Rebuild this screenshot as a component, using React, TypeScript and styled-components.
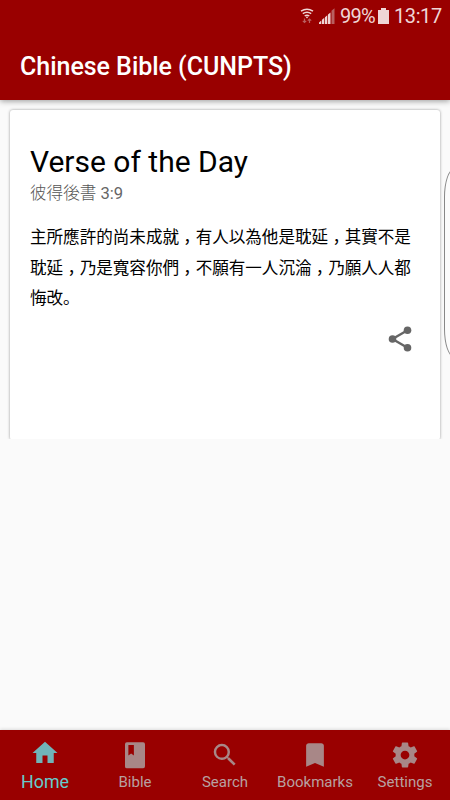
import React from "react";
import styled, { createGlobalStyle } from "styled-components";

const GlobalStyle = createGlobalStyle`
  * { box-sizing: border-box; }
  body { margin: 0; background: #fafafa; font-family: Roboto, "Noto Sans CJK JP", sans-serif; }
`;

const Screen = styled.div`
  position: relative;
  display: flex;
  flex-direction: column;
  width: 450px;
  height: 800px;
  overflow: hidden;
  background: #fafafa;
`;

const Header = styled.header`
  flex: none;
  height: 100px;
  background: #990000;
  box-shadow: 0 1px 6px rgba(0, 0, 0, 0.4);
  z-index: 1;
`;

const StatusBar = styled.div`
  display: flex;
  align-items: center;
  justify-content: flex-end;
  height: 32px;
  padding-right: 8px;
  color: #efd6d6;
  font-size: 20px;
  line-height: 32px;
  svg { flex: none; }
`;

const Percent = styled.span`
  width: 35px;
  margin: 0 3px 0 5px;
  letter-spacing: -0.8px;
  white-space: nowrap;
`;

const Clock = styled.span`
  width: 48px;
  margin-left: 5px;
  letter-spacing: -0.4px;
  white-space: nowrap;
`;

const Title = styled.h1`
  margin: 0;
  padding: 0 20px;
  color: #fff;
  font-size: 25px;
  font-weight: 500;
  line-height: 70px;
  letter-spacing: -0.03px;
  white-space: nowrap;
`;

const Content = styled.main`
  flex: 1;
  padding: 10px 10px 0;
`;

const CardClip = styled.div`
  height: 329px;
  margin: -4px -6px 0;
  padding: 4px 6px 0;
  box-sizing: content-box;
  overflow: hidden;
`;

const Card = styled.article`
  height: 330px;
  padding: 32px 20px 0;
  background: #fff;
  border-radius: 3px;
  box-shadow: 0 0 3px rgba(0, 0, 0, 0.4);
`;

const Heading = styled.h2`
  margin: 0;
  color: #000;
  font-size: 30px;
  font-weight: 400;
  line-height: 40px;
`;

const Reference = styled.p`
  margin: 1px 0 0;
  color: #666;
  font-family: Roboto, "Noto Sans CJK JP", sans-serif;
  font-size: 16.6px;
  font-weight: 400;
  line-height: 22px;
`;

const CjkLight = styled.span`
  color: #555;
  font-weight: 300;
`;

const Verse = styled.p`
  margin: 18px 0 0;
  color: #000;
  font-size: 16.57px;
  line-height: 30.5px;
  white-space: nowrap;
`;

const Line = styled.span`
  display: block;
`;

const Comma = styled.span`
  position: relative;
  top: 5px;
  font-family: "Noto Sans CJK TC", sans-serif;
  line-height: 1;
`;

const ShareButton = styled.button`
  display: block;
  margin: 9px 7px 0 auto;
  padding: 0;
  border: 0;
  background: none;
  svg { display: block; }
`;

const EdgeHandle = styled.div`
  position: absolute;
  top: 169px;
  left: 444px;
  width: 20px;
  height: 188px;
  border: 1px solid #888;
  border-radius: 10px / 28px;
  background: #fcfcfc;
`;

const TabBar = styled.nav`
  display: grid;
  grid-template-columns: repeat(5, 1fr);
  flex: none;
  height: 70px;
  background: #990000;
  box-shadow: 0 -1px 3px rgba(0, 0, 0, 0.12);
`;

const Tab = styled.a<{ $active?: boolean }>`
  display: flex;
  flex-direction: column;
  align-items: center;
  padding-top: ${(p) => (p.$active ? 8 : 10)}px;
  color: ${(p) => (p.$active ? "#66cccc" : "#b8a0a0")};
  font-size: ${(p) => (p.$active ? 17.8 : 15)}px;
  line-height: 24px;
  svg { display: block; flex: none; color: ${(p) => (p.$active ? "#70b4b8" : "#a88787")}; }
`;

const TabLabel = styled.span<{ $active?: boolean }>`
  margin-top: ${(p) => (p.$active ? 2 : 0)}px;
`;

const tabs = [
  { label: "Home", active: true, d: "M10 20v-6h4v6h5v-8h3L12 3 2 12h3v8z" },
  { label: "Bible", d: "M5.5 1.8h13a1.5 1.5 0 0 1 1.5 1.5v17.8a1.5 1.5 0 0 1-1.5 1.5h-13A1.5 1.5 0 0 1 4 21.100V3.300a1.500 1.500 0 0 1 1.500-1.500zM6.700 4v8.300l2.200-1.600 2.200 1.600V4z" },
  { label: "Search", d: "M15.5 14h-.79l-.28-.27A6.471 6.471 0 0 0 16 9.500 6.500 6.500 0 1 0 9.500 16c1.610 0 3.090-.590 4.230-1.570l.270.280v.790l5 4.990L20.490 19l-4.990-5zm-6 0C7.010 14 5 11.990 5 9.500S7.010 5 9.500 5 14 7.010 14 9.500 11.990 14 9.500 14z" },
  { label: "Bookmarks", d: "M17 2.600H7C5.900 2.600 4.900 3.500 4.900 4.600v16.800L12 18.400l7.100 3V4.600c0-1.100-.9-2-2.100-2z" },
  { label: "Settings", d: "M19.430 12.980c.040-.320.070-.640.070-.980s-.030-.660-.070-.980l2.110-1.650c.190-.150.240-.420.120-.640l-2-3.460c-.120-.220-.390-.300-.610-.220l-2.490 1c-.520-.400-1.080-.730-1.690-.980l-.380-2.650C14.460 2.180 14.250 2 14 2h-4c-.250 0-.460.180-.490.420l-.380 2.650c-.610.250-1.170.590-1.690.980l-2.490-1c-.230-.090-.490 0-.610.220l-2 3.460c-.130.220-.070.490.120.640l2.110 1.650c-.040.320-.070.650-.070.980s.030.660.070.980l-2.110 1.650c-.190.150-.240.420-.120.640l2 3.460c.120.220.390.300.610.220l2.490-1c.520.400 1.080.730 1.690.980l.380 2.650c.030.240.240.420.490.420h4c.250 0 .460-.180.490-.420l.380-2.650c.610-.250 1.170-.590 1.690-.980l2.490 1c.230.090.490 0 .610-.220l2-3.460c.120-.220.070-.490-.120-.640l-2.110-1.650zM12 15.500c-1.930 0-3.500-1.570-3.500-3.500s1.570-3.500 3.500-3.500 3.500 1.570 3.500 3.500-1.570 3.500-3.500 3.500z" },
];

const verseLines = [
  "主所應許的尚未成就，有人以為他是耽延，其實不是",
  "耽延，乃是寬容你們，不願有一人沉淪，乃願人人都",
  "悔改。",
];

function VerseLine({ text }: { text: string }) {
  return (
    <Line>
      {text.split(/(，)/).map((part, i) =>
        part === "，" ? <Comma key={i} lang="zh-TW">{part}</Comma> : <React.Fragment key={i}>{part}</React.Fragment>,
      )}
    </Line>
  );
}

function WifiIcon() {
  return (
    <svg width="14" height="16" viewBox="0 0 14 16" fill="none" stroke="#efd6d6" strokeWidth="1.500">
      <path d="M1 3.200Q7-.800 13 3.200M2.800 5.700Q7 2.800 11.200 5.700M4.700 8Q7 6.300 9.300 8" />
      <circle cx="7" cy="9.300" r=".9" fill="#efd6d6" stroke="none" />
      <path d="M4.500 10.500v4M2.800 12.800l1.700 1.700 1.700-1.700M9.500 15v-4M7.800 12.700l1.700-1.700 1.700 1.700" stroke="#b95f5f" strokeWidth="1.200" />
    </svg>
  );
}

function SignalIcon() {
  return (
    <svg width="16" height="16" viewBox="0 0 16 16" fill="#efd6d6">
      <path d="M0 16v-1.500l2.300-1.900V16zM3 16v-4.300l2.300-1.900V16zM6 16V9.200l2.300-1.900V16zM9 16V6.400l2.500-2V16z" />
      <path d="M12.500 16V2.700L15.500.3V16z" fill="#b95f5f" />
    </svg>
  );
}

function BatteryIcon() {
  return (
    <svg width="11" height="16" viewBox="0 0 11 16" fill="#efd6d6">
      <path d="M3 0h5v2h3v14H0V2h3z" />
    </svg>
  );
}

const StatusIcons = styled.div`
  display: flex;
  align-items: center;
  gap: 5px;
`;

export default function App() {
  return (
    <Screen>
      <GlobalStyle />
      <Header>
        <StatusBar>
          <StatusIcons>
            <WifiIcon />
            <SignalIcon />
          </StatusIcons>
          <Percent>99%</Percent>
          <BatteryIcon />
          <Clock>13:17</Clock>
        </StatusBar>
        <Title>Chinese Bible (CUNPTS)</Title>
      </Header>
      <Content>
        <CardClip>
          <Card>
            <Heading>Verse of the Day</Heading>
            <Reference>
              <CjkLight>彼得後書</CjkLight> 3:9
            </Reference>
            <Verse lang="ja">
              {verseLines.map((text) => (
                <VerseLine key={text} text={text} />
              ))}
            </Verse>
            <ShareButton aria-label="Share">
              <svg width="26" height="30" viewBox="0 0 26 30" fill="#666">
                <path d="M20.500 6.300 5.500 15l15 8.700" fill="none" stroke="#666" strokeWidth="2.400" />
                <circle cx="20.500" cy="6.300" r="3.800" />
                <circle cx="5.500" cy="15" r="3.800" />
                <circle cx="20.500" cy="23.700" r="3.800" />
              </svg>
            </ShareButton>
          </Card>
        </CardClip>
      </Content>
      <TabBar>
        {tabs.map((tab) => (
          <Tab key={tab.label} $active={tab.active}>
            <svg width="30" height="30" viewBox="0 0 24 24" fill="currentColor" fillRule="evenodd">
              <path d={tab.d} />
            </svg>
            <TabLabel $active={tab.active}>{tab.label}</TabLabel>
          </Tab>
        ))}
      </TabBar>
      <EdgeHandle />
    </Screen>
  );
}
